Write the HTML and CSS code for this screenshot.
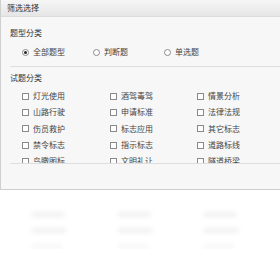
FILE: index.html
```html
<!DOCTYPE html>
<html>
<head>
    <title>筛选选择</title>
    <meta name="viewport" content="width=device-width, initial-scale=1.0">
    <link rel="stylesheet" href="styles.css">
</head>
<body>
    <div class="panel">
        <div class="panel-title">筛选选择</div>

        <div class="group-label">题型分类</div>
        <div class="radio-row">
            <label class="opt"><span class="radio checked"></span>全部题型</label>
            <label class="opt"><span class="radio"></span>判断题</label>
            <label class="opt"><span class="radio"></span>单选题</label>
        </div>

        <div class="sep"></div>

        <div class="group-label second">试题分类</div>
        <div class="check-list">
            <label class="chk"><span class="box"></span>灯光使用</label>
            <label class="chk"><span class="box"></span>酒驾毒驾</label>
            <label class="chk"><span class="box"></span>情景分析</label>
            <label class="chk"><span class="box"></span>山路行驶</label>
            <label class="chk"><span class="box"></span>申请标准</label>
            <label class="chk"><span class="box"></span>法律法规</label>
            <label class="chk"><span class="box"></span>伤员救护</label>
            <label class="chk"><span class="box"></span>标志应用</label>
            <label class="chk"><span class="box"></span>其它标志</label>
            <label class="chk"><span class="box"></span>禁令标志</label>
            <label class="chk"><span class="box"></span>指示标志</label>
            <label class="chk"><span class="box"></span>道路标线</label>
            <label class="chk"><span class="box"></span>鸟瞰图标</label>
            <label class="chk"><span class="box"></span>文明礼让</label>
            <label class="chk"><span class="box"></span>隧道桥梁</label>
        </div>
    </div>

    <!-- faded content behind -->
    <div class="ghost">
        <div class="ghost-col"><span class="g1"></span><span class="g2"></span><span class="g3"></span></div>
        <div class="ghost-col"><span class="g1"></span><span class="g2"></span><span class="g3"></span></div>
        <div class="ghost-col"><span class="g1"></span><span class="g2"></span><span class="g3"></span></div>
    </div>
</body>
</html>
```

FILE: styles.css
```css
* {
    margin: 0;
    padding: 0;
    box-sizing: border-box;
}

body {
    background: #fff;
    font-family: "Noto Sans CJK SC", "Noto Sans", sans-serif;
    font-size: 8px;
    color: #444;
    width: 280px;
    overflow: hidden;
}

.panel {
    background-color: #f7f7f7;
    border-left: 1px solid #cfcfcf;
    border-bottom: 1px solid #cfcfcf;
    height: 190px;
}

.panel-title {
    height: 17px;
    line-height: 16px;
    padding-left: 6px;
    background: linear-gradient(#f6f6f6, #e6e6e6);
    border-bottom: 1px solid #dcdcdc;
    color: #333;
}

.group-label {
    height: 12px;
    line-height: 12px;
    margin-top: 10px;
    padding-left: 9px;
    color: #333;
}

.group-label.second {
    margin-top: 5px;
}

.radio-row {
    display: flex;
    height: 12px;
    margin-top: 7px;
    padding-left: 21px;
}

.opt {
    display: flex;
    align-items: center;
    gap: 4px;
    width: 71px;
    line-height: 12px;
}

.radio {
    width: 7px;
    height: 7px;
    border: 1px solid #8a8a8a;
    border-radius: 50%;
    background: #fff;
    position: relative;
}

.radio.checked::after {
    content: "";
    position: absolute;
    left: 1px;
    top: 1px;
    width: 3px;
    height: 3px;
    border-radius: 50%;
    background: #222;
}

.sep {
    height: 1px;
    margin: 8px 0 0 9px;
    background: #dedede;
}

.check-list {
    display: grid;
    grid-template-columns: 88px 87px 80px;
    grid-auto-rows: 16.3px;
    align-items: center;
    height: 76px;
    margin: 4px 0 0 9px;
    padding-left: 12px;
    overflow: hidden;
    border-bottom: 1px solid #dedede;
}

.chk {
    display: flex;
    align-items: center;
    gap: 4px;
    line-height: 12px;
    white-space: nowrap;
}

.box {
    width: 7px;
    height: 7px;
    border: 1px solid #8a8a8a;
    background: #fff;
}

.ghost {
    display: grid;
    grid-template-columns: 86px 86px 86px;
    padding: 22px 0 0 32px;
    filter: blur(2px);
}

.ghost-col {
    display: flex;
    flex-direction: column;
    align-items: flex-start;
    gap: 11px;
}

.ghost-col span {
    display: block;
    height: 5px;
    background: #f1f1f1;
}

.g1 { width: 32px; }
.g2 { width: 34px; }
.g3 { width: 30px; background: #f7f7f7 !important; }
```
